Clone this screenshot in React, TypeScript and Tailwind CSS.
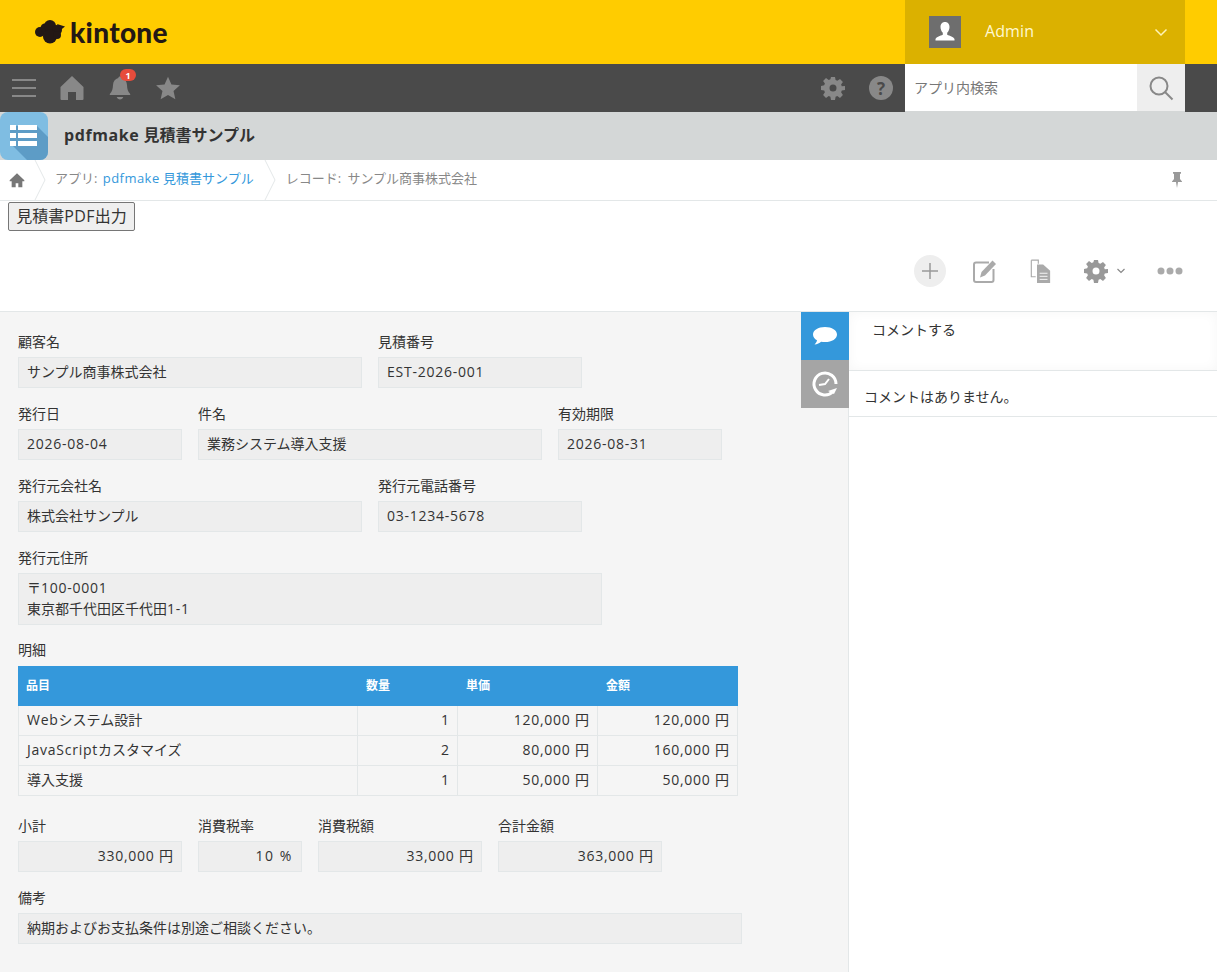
import React from "react";

const Gear = ({ s, c }: { s: number; c: string }) => (
  <svg width={s} height={s} viewBox="0 0 24 24" fill={c}>
    <path fillRule="evenodd" d="M10 1h4l.6 3.1 1.700.7L19 3l2.900 2.900-1.800 2.700.7 1.700L24 10v4l-3.200.6-.7 1.700 1.800 2.700L19 21.900l-2.700-1.800-1.700.7L14 24h-4l-.6-3.200-1.700-.7L5 21.900 2.100 19l1.800-2.700-.7-1.700L0 14v-4l3.200-.7.7-1.700L2.100 5 5 2.100l2.700 1.800 1.700-.7zM12 8.500a3.500 3.500 0 1 0 0 7 3.500 3.500 0 0 0 0-7z" />
  </svg>
);

const L = ({ children }: { children: React.ReactNode }) => <span className="tracking-[0.75px]">{children}</span>;

const Field = ({ label, value, w, right }: { label: string; value: React.ReactNode; w: string; right?: boolean }) => (
  <div className={w}>
    <div className="h-[25px] text-[14px] leading-[20px] text-[#333]">{label}</div>
    <div className={`h-[31px] border border-[#e3e7e8] bg-[#eeeeee] px-[8px] text-[14px] leading-[28px] text-[#333] ${right ? "text-right" : ""}`}>
      {value}
    </div>
  </div>
);

const rows: [React.ReactNode, string, string, string, string][] = [
  [<><L>Web</L>システム設計</>, "1", "120,000 ", "120,000 ", "a"],
  [<><L>JavaScript</L>カスタマイズ</>, "2", "80,000 ", "160,000 ", "b"],
  ["導入支援", "1", "50,000 ", "50,000 ", "c"],
];

export default function App() {
  return (
    <div className="w-[1217px] h-[972px] overflow-hidden bg-white text-[#333] font-['Open_Sans','Noto_Sans_CJK_JP',sans-serif]">
      {/* Yellow header */}
      <div className="flex h-[64px] justify-between bg-[#ffcc00] pr-[32px]">
        <div className="flex items-center pl-[35px]">
          <svg width="30" height="24" viewBox="0 0 30 24" fill="#231815">
            <circle cx="5" cy="12" r="5" />
            <circle cx="10" cy="8" r="4.500" />
            <circle cx="15" cy="6" r="6" />
            <circle cx="22" cy="10" r="5" />
            <circle cx="15" cy="16.500" r="7" />
            <circle cx="22" cy="15" r="4" />
            <path d="m22 4 8 2.500-5 4z" />
          </svg>
          <span className="ml-[5px] font-['Lato'] text-[28px] font-black leading-none tracking-[0.3px] text-[#231815]">kintone</span>
        </div>
        <div className="flex w-[280px] items-center bg-[#dbb100] pl-[24px] pr-[16px]">
          <div className="flex h-[32px] w-[32px] items-center justify-center bg-[#6e6e6e]">
            <svg width="24" height="24" viewBox="0 0 24 24" fill="#fff">
              <path d="M12 2c-3 0-4.500 2.300-4.500 5 0 2.500 1 4.500 2.300 5.700v2.100c-2.500 1-6.300 2-7.300 4.200v1.500h19V19c-1-2.200-4.800-3.200-7.300-4.200v-2.100c1.300-1.200 2.300-3.200 2.300-5.700 0-2.700-1.500-5-4.500-5z" />
            </svg>
          </div>
          <span className="ml-[24px] flex-1 pb-[2px] text-[16px] tracking-[0.1px] text-[#fff8d0]">Admin</span>
          <svg width="16" height="16" viewBox="0 0 16 16" fill="none" stroke="#fff4b8" strokeWidth="1.500">
            <path d="M2.500 5.500 8 11l5.500-5.500" />
          </svg>
        </div>
      </div>

      {/* Dark nav */}
      <div className="flex h-[48px] items-center bg-[#4a4a4a] pr-[32px]">
        <div className="flex w-[48px] justify-center">
          <svg width="24" height="22" viewBox="0 0 24 22" fill="#888">
            <rect y="2" width="24" height="2" />
            <rect y="10" width="24" height="2" />
            <rect y="18" width="24" height="2" />
          </svg>
        </div>
        <div className="flex w-[48px] justify-center">
          <svg width="24" height="24" viewBox="0 0 24 24" fill="#888">
            <path d="M12 0 .5 11v12a1 1 0 0 0 1 1H8v-8h8v8h6.500a1 1 0 0 0 1-1V11z" />
          </svg>
        </div>
        <div className="relative flex w-[48px] justify-center">
          <svg width="24" height="26" viewBox="0 0 24 26" fill="#888">
            <path d="M12 1.500c-1 0-1.700.7-1.700 1.600C7 4 5.200 6.500 5 10c-.2 4-.7 6.500-3.200 9v1h20.400v-1c-2.500-2.500-3-5-3.200-9-.2-3.500-2-6-5.300-6.900 0-.9-.7-1.600-1.700-1.600zM8.700 22c.5 1.500 1.800 2.500 3.300 2.500s2.800-1 3.300-2.500z" />
          </svg>
          <span className="absolute left-[24px] top-[-6px] flex h-[12px] w-[16px] items-center justify-center rounded-full bg-[#e74c3c] text-[9px] font-bold leading-none text-white">1</span>
        </div>
        <div className="flex w-[48px] justify-center">
          <svg width="26" height="26" viewBox="0 0 24 24" fill="#888">
            <path d="m12 1.500 3.200 7.200 7.800.8-5.900 5.200 1.700 7.700L12 18.400l-6.800 4 1.700-7.700L1 9.500l7.800-.8z" />
          </svg>
        </div>
        <div className="flex-1" />
        <div className="flex w-[48px] justify-center">
          <Gear s={24} c="#888" />
        </div>
        <div className="flex w-[48px] justify-center">
          <div className="flex h-[24px] w-[24px] items-center justify-center rounded-full bg-[#888] text-[17px] font-bold leading-none text-[#4a4a4a]">?</div>
        </div>
        <div className="flex h-[48px] w-[232px] items-center border-b border-[#d4d7d7] bg-white pl-[9px] text-[14px] text-[#777]">アプリ内検索</div>
        <div className="flex h-[48px] w-[48px] items-center justify-center border-b border-[#d4d7d7] bg-[#eeeeee]">
          <svg width="26" height="26" viewBox="0 0 26 26" fill="none" stroke="#888" strokeWidth="2">
            <circle cx="11" cy="11" r="8.500" />
            <path d="m17 17 7.500 7.500" />
          </svg>
        </div>
      </div>

      {/* App title bar */}
      <div className="flex h-[48px] items-center bg-[#d4d7d7]">
        <div className="h-[48px] w-[48px] overflow-hidden rounded-[8px] bg-[#7fbde2]">
          <svg width="48" height="48" viewBox="0 0 48 48">
            <path d="M37 14 48 25v23H27L10 31V14z" fill="#5d9cc6" />
            <g fill="#fff">
              <rect x="10" y="13" width="6" height="5" />
              <rect x="18" y="13" width="19" height="5" />
              <rect x="10" y="21" width="6" height="5" />
              <rect x="18" y="21" width="19" height="5" />
              <rect x="10" y="29" width="6" height="5" />
              <rect x="18" y="29" width="19" height="5" />
            </g>
          </svg>
        </div>
        <div className="ml-[16px] pb-[2px] text-[16px] font-bold text-[#333]">
          <span className="tracking-[0.6px]">pdfmake</span> 見積書サンプル
        </div>
      </div>

      {/* Breadcrumb */}
      <div className="flex h-[41px] items-center border-b border-[#e3e7e8] text-[13px] text-[#888]">
        <div className="flex w-[34px] justify-center">
          <svg width="16" height="16" viewBox="0 0 24 24" fill="#777">
            <path d="M12 2 1 12.500V14h3v9h6v-6h4v6h6v-9h3v-1.500z" />
          </svg>
        </div>
        <svg width="12" height="40" viewBox="0 0 12 40" fill="none" stroke="#e3e7e8"><path d="m1 0 10 20L1 40" /></svg>
        <div className="ml-[9px] pb-[2px]">
          アプリ<span className="tracking-[1px]">: </span>
          <span className="text-[#3498db]"><span className="tracking-[0.45px]">pdfmake</span> 見積書サンプル</span>
        </div>
        <svg className="ml-[10px]" width="12" height="40" viewBox="0 0 12 40" fill="none" stroke="#e3e7e8"><path d="m1 0 10 20L1 40" /></svg>
        <div className="ml-[10px] pb-[2px]">
          レコード<span className="tracking-[1.5px]">: </span>サンプル商事株式会社
        </div>
        <div className="flex-1" />
        <svg className="mr-[33px]" width="14" height="18" viewBox="0 0 14 18" fill="#999">
          <path d="M3 1h8v1.500L10 3v5l2 2.500V11H8l-1 6-1-6H2v-.5L4 8V3l-1-.5z" />
        </svg>
      </div>

      {/* Toolbar */}
      <div className="h-[111px] border-b border-[#e3e7e8] bg-white pl-[8px] pt-[1px]">
        <button className="h-[29px] w-[127px] rounded-[2px] border border-[#767676] bg-[#efefef] pb-[2px] text-[16px] leading-none text-[#333]">
          見積書<span className="tracking-[0.4px]">PDF</span>出力
        </button>
        <div className="mt-[24px] flex h-[32px] items-center pl-[906px]">
          <div className="flex h-[32px] w-[32px] items-center justify-center rounded-full bg-[#eeeeee]">
            <svg width="18" height="18" viewBox="0 0 18 18" stroke="#999" strokeWidth="1.500"><path d="M9 1v16M1 9h16" /></svg>
          </div>
          <svg className="ml-[26px]" width="26" height="26" viewBox="0 0 26 26" fill="none">
            <path d="M17 4.500H4a2 2 0 0 0-2 2V22a2 2 0 0 0 2 2h15.500a2 2 0 0 0 2-2V11" stroke="#aaa" strokeWidth="2" />
            <path d="m9.500 14 11-11.500 3.500 3.500-11 11.500-5 2z" fill="#aaa" />
          </svg>
          <svg className="ml-[32px]" width="21" height="25" viewBox="0 0 24 28">
            <path d="M1.500 1h8v4M1.500 1v19h5" fill="none" stroke="#aaa" strokeWidth="1.300" />
            <path d="M8 6h7l8 7v14H8z" fill="#aaa" />
            <path d="M11 16h9M11 19.500h9M11 23h9" stroke="#fff" strokeWidth="1" />
          </svg>
          <div className="ml-[33px]">
            <Gear s={24} c="#999" />
          </div>
          <svg className="ml-[8px]" width="10" height="10" viewBox="0 0 10 10" fill="none" stroke="#888" strokeWidth="1.200"><path d="m1.500 3 3.500 3.500L8.500 3" /></svg>
          <svg className="ml-[31px]" width="26" height="8" viewBox="0 0 26 8" fill="#aaa">
            <circle cx="4" cy="4" r="3.500" /><circle cx="13" cy="4" r="3.500" /><circle cx="22" cy="4" r="3.500" />
          </svg>
        </div>
      </div>

      {/* Main */}
      <div className="flex h-[660px] bg-[#f5f5f5]">
        <div className="w-[801px] pl-[18px] pt-[20px]">
          <div className="flex gap-[16px]">
            <Field label="顧客名" value="サンプル商事株式会社" w="w-[344px]" />
            <Field label="見積番号" value={<L>EST-2026-001</L>} w="w-[204px]" />
          </div>
          <div className="mt-[16px] flex gap-[16px]">
            <Field label="発行日" value={<L>2026-08-04</L>} w="w-[164px]" />
            <Field label="件名" value="業務システム導入支援" w="w-[344px]" />
            <Field label="有効期限" value={<L>2026-08-31</L>} w="w-[164px]" />
          </div>
          <div className="mt-[16px] flex gap-[16px]">
            <Field label="発行元会社名" value="株式会社サンプル" w="w-[344px]" />
            <Field label="発行元電話番号" value={<L>03-1234-5678</L>} w="w-[204px]" />
          </div>
          <div className="mt-[16px] w-[584px]">
            <div className="h-[25px] text-[14px] leading-[20px]">発行元住所</div>
            <div className="h-[52px] border border-[#e3e7e8] bg-[#eeeeee] px-[8px] pt-[3px] text-[14px] leading-[21px]">
              〒<L>100-0001</L>
              <br />
              東京都千代田区千代田<L>1-1</L>
            </div>
          </div>
          <div className="mt-[15px] h-[26px] text-[14px] leading-[20px]">明細</div>
          <div className="w-[720px]">
            <div className="flex h-[40px] items-center bg-[#3498db] text-[12px] font-bold text-white">
              <div className="w-[340px] pl-[8px]">品目</div>
              <div className="w-[100px] pl-[8px]">数量</div>
              <div className="w-[140px] pl-[8px]">単価</div>
              <div className="w-[140px] pl-[8px]">金額</div>
            </div>
            {rows.map((r) => (
              <div key={r[4]} className="flex h-[30px] border-b border-l border-r border-[#e3e7e8] text-[14px] leading-[28px]">
                <div className="w-[339px] border-r border-[#e3e7e8] px-[8px]">{r[0]}</div>
                <div className="w-[100px] border-r border-[#e3e7e8] px-[8px] text-right">{r[1]}</div>
                <div className="w-[140px] border-r border-[#e3e7e8] px-[8px] text-right"><L>{r[2]}</L>円</div>
                <div className="w-[139px] px-[8px] text-right"><L>{r[3]}</L>円</div>
              </div>
            ))}
          </div>
          <div className="mt-[20px] flex gap-[16px]">
            <Field label="小計" value={<><L>330,000 </L>円</>} w="w-[164px]" right />
            <Field label="消費税率" value={<span className="tracking-[1.6px]">10 %</span>} w="w-[104px]" right />
            <Field label="消費税額" value={<><L>33,000 </L>円</>} w="w-[164px]" right />
            <Field label="合計金額" value={<><L>363,000 </L>円</>} w="w-[164px]" right />
          </div>
          <div className="mt-[16px]">
            <Field label="備考" value="納期およびお支払条件は別途ご相談ください。" w="w-[724px]" />
          </div>
        </div>
        <div className="relative z-10 -mr-[1px] w-[48px]">
          <div className="flex h-[48px] items-center justify-center bg-[#3498db]">
            <svg width="26" height="22" viewBox="0 0 26 22" fill="#fff">
              <path d="M13 2C6 2 1 5.200 1 9.500c0 2.500 1.600 4.500 4 5.800-.3 1.700-1.200 3.200-2.500 4.200 2.700-.2 5-1.300 6.600-2.700 1.200.2 2.500.3 3.900.3 7 0 12-3.300 12-7.600S20 2 13 2z" />
            </svg>
          </div>
          <div className="flex h-[48px] items-center justify-center bg-[#a5a5a5]">
            <svg width="28" height="28" viewBox="0 0 28 28" fill="none" stroke="#fff" strokeWidth="3">
              <path d="M22 21.500A11 11 0 1 1 25 14" />
              <path d="m8 15 6-1 4-5" strokeWidth="2" />
              <path d="m17 21 6 3 3-6z" fill="#fff" stroke="none" />
            </svg>
          </div>
        </div>
        <div className="w-[369px] border-l border-[#e3e7e8] bg-white">
          <div className="h-[59px] border-b border-[#e3e7e8] pl-[23px] text-[14px] leading-[36px] shadow-[inset_0_0_12px_rgba(0,0,0,0.04)]">コメントする</div>
          <div className="h-[46px] border-b border-[#e3e7e8] pl-[15px] text-[14px] leading-[52px]">コメントはありません。</div>
        </div>
      </div>
    </div>
  );
}
